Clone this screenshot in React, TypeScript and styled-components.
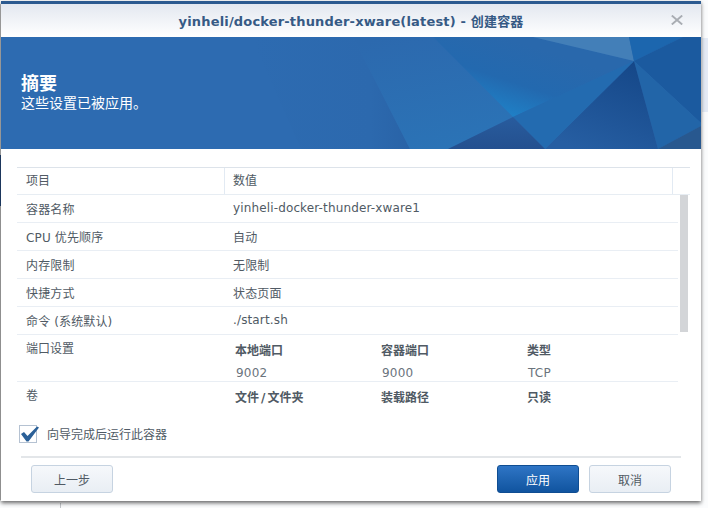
import React from "react";
import styled, { createGlobalStyle } from "styled-components";

const Global = createGlobalStyle`
  html, body { margin: 0; padding: 0; background: #fbfcfd; overflow: hidden; }
  * { box-sizing: border-box; }
`;

const FONT = `"DejaVu Sans", "Noto Sans CJK SC", sans-serif`;

const rows = [
  ["容器名称", "yinheli-docker-thunder-xware1"],
  ["CPU 优先顺序", "自动"],
  ["内存限制", "无限制"],
  ["快捷方式", "状态页面"],
  ["命令 (系统默认)", "./start.sh"],
];

const Banner = () => (
  <BannerArt viewBox="0 0 700 112" preserveAspectRatio="none">
    <defs>
      <linearGradient id="glow" gradientUnits="userSpaceOnUse" x1="535" y1="10" x2="512" y2="80">
        <stop offset="0" stopColor="#2968ac" />
        <stop offset="0.55" stopColor="#2369af" />
        <stop offset="1" stopColor="#1f80c6" />
      </linearGradient>
      <linearGradient id="panel" x1="0.2" y1="0" x2="0.5" y2="1">
        <stop offset="0" stopColor="#2c69ae" />
        <stop offset="1" stopColor="#2b73b6" />
      </linearGradient>
      <linearGradient id="left" x1="0" y1="0" x2="1" y2="0">
        <stop offset="0" stopColor="#2d6bb1" />
        <stop offset="0.75" stopColor="#2c69ae" />
        <stop offset="1" stopColor="#2963a7" />
      </linearGradient>
      <linearGradient id="deep" x1="0.8" y1="0" x2="0.3" y2="1">
        <stop offset="0" stopColor="#154788" />
        <stop offset="1" stopColor="#265ea2" />
      </linearGradient>
      <linearGradient id="low" x1="0.5" y1="0" x2="0.5" y2="1">
        <stop offset="0" stopColor="#285c9e" />
        <stop offset="1" stopColor="#24508f" />
      </linearGradient>
    </defs>
    <rect width="700" height="112" fill="#2d6bb1" />
    <polygon points="250,0 352,0 409,112 300,112" fill="url(#left)" />
    <polygon points="352,0 432,0 512,80 447,112 409,112" fill="url(#panel)" />
    <polygon points="432,0 532,0 633,24 512,80" fill="url(#glow)" />
    <polygon points="532,0 628,0 633,24" fill="#437fb8" />
    <polygon points="628,0 682,0 633,24" fill="#1c66ae" />
    <polygon points="682,0 700,0 700,86 633,24" fill="#1b5a9f" />
    <polygon points="633,24 700,86 700,89 657,112" fill="#2265a8" />
    <polygon points="633,24 657,112 544,112" fill="url(#deep)" />
    <polygon points="633,24 544,112 512,80" fill="#236bb0" />
    <polygon points="512,80 544,112 447,112" fill="url(#low)" />
    <polygon points="700,89 700,112 657,112" fill="#28588f" />
  </BannerArt>
);

export default function App() {
  return (
    <>
      <Global />
      <Page>
        <SideStripe />
        <Dialog>
          <TitleBar>
            <Title>yinheli/docker-thunder-xware(latest) - 创建容器</Title>
            <CloseIcon viewBox="0 0 12 10">
              <path d="M0.8 0.5 L11.2 9.5 M11.2 0.5 L0.8 9.5" stroke="#a9adb3" strokeWidth="1.9" />
            </CloseIcon>
          </TitleBar>
          <Hero>
            <Banner />
            <HeroHeading>摘要</HeroHeading>
            <HeroSub>这些设置已被应用。</HeroSub>
          </Hero>
          <Body>
            <Table>
              <HeaderRow>
                <HeaderCell $width={207}>项目</HeaderCell>
                <HeaderCell $width={448} $divided>数值</HeaderCell>
              </HeaderRow>
              <ScrollArea>
                <Scrollbar />
                {rows.map(([k, v]) => (
                  <Row key={k}>
                    <KeyCell>{k}</KeyCell>
                    <ValueCell>{v}</ValueCell>
                  </Row>
                ))}
                <TallRow $height={47}>
                  <KeyCellTop>端口设置</KeyCellTop>
                  <SubGrid>
                    <b>本地端口</b><b>容器端口</b><b>类型</b>
                    <span>9002</span><span>9000</span><span>TCP</span>
                  </SubGrid>
                </TallRow>
                <TallRow $height={30} $plain>
                  <KeyCellTop>卷</KeyCellTop>
                  <SubGrid>
                    <b>文件<Slash>/</Slash>文件夹</b><b>装载路径</b><b>只读</b>
                  </SubGrid>
                </TallRow>
              </ScrollArea>
            </Table>
            <CheckRow>
              <CheckBox>
                <svg width="20" height="16" viewBox="0 0 20 16">
                  <path d="M1 8 L4 6 L7.5 10 L17 0.5 L19 1.5 L8.5 15.5 L6.5 15.5 Z" fill="#2b6098" />
                </svg>
              </CheckBox>
              <CheckLabel>向导完成后运行此容器</CheckLabel>
            </CheckRow>
          </Body>
          <Footer>
            <Button>上一步</Button>
            <Spacer />
            <Button $primary>应用</Button>
            <Button>取消</Button>
          </Footer>
        </Dialog>
      </Page>
    </>
  );
}

const Page = styled.div`
  position: relative;
  width: 708px;
  height: 508px;
  padding: 1px 0 0 1px;
  background:
    linear-gradient(#e5ebf5, #e5ebf5) right 38px / 6px 74px no-repeat,
    linear-gradient(#c4c7cb, #c4c7cb) 60px 503px / 1px 5px no-repeat,
    #fbfcfd;
  font-family: ${FONT};
  overflow: hidden;
`;
const SideStripe = styled.div`
  position: absolute;
  left: 0;
  top: 4px;
  width: 1px;
  height: 496px;
  background: linear-gradient(
    #c8c8c8 0,
    #c8c8c8 151px,
    #24487a 151px,
    #24487a 202px,
    #bdbdbd 202px
  );
`;
const Dialog = styled.div`
  position: relative;
  width: 700px;
  height: 500px;
  background: #fff;
  border-top: 3px solid #2b5a90;
  box-shadow: 0 2px 4px 0 rgba(0, 0, 0, 0.6);
  display: flex;
  flex-direction: column;
`;
const TitleBar = styled.div`
  position: relative;
  height: 33px;
  flex: none;
  display: flex;
  align-items: center;
  justify-content: center;
  background: linear-gradient(#e3e8f0, #fff);
`;
const Title = styled.div`
  font-size: 13px;
  font-weight: bold;
  letter-spacing: 0.17px;
  color: #365a85;
`;
const CloseIcon = styled.svg`
  position: absolute;
  right: 18px;
  top: 11px;
  width: 12px;
  height: 10px;
`;
const Hero = styled.div`
  position: relative;
  height: 112px;
  flex: none;
  padding: 36px 0 0 20px;
  color: #fff;
  background: #2d6bb1;
  overflow: hidden;
`;
const BannerArt = styled.svg`
  position: absolute;
  left: 0;
  top: 0;
  width: 100%;
  height: 100%;
`;
const HeroHeading = styled.div`
  position: relative;
  font-size: 18px;
  line-height: 21px;
  font-weight: bold;
`;
const HeroSub = styled.div`
  position: relative;
  font-size: 14px;
  line-height: 18px;
`;
const Body = styled.div`
  flex: 1;
  padding: 18px 11px 0 16px;
`;
const Table = styled.div`
  border-top: 1px solid #dde3ea;
`;
const HeaderRow = styled.div`
  display: flex;
  height: 27px;
  border-bottom: 1px solid #e7edf3;
`;
const HeaderCell = styled.div<{ $width: number; $divided?: boolean }>`
  width: ${(p) => p.$width + (p.$divided ? 1 : 0)}px;
  padding-left: ${(p) => (p.$divided ? 8 : 9)}px;
  border-left: ${(p) => (p.$divided ? "1px solid #e2eaf3" : "none")};
  border-right: ${(p) => (p.$divided ? "1px solid #e2eaf3" : "none")};
  font-size: 12px;
  line-height: 26px;
  color: #505a64;
`;
const ScrollArea = styled.div`
  position: relative;
  width: 661px;
`;
const Scrollbar = styled.div`
  position: absolute;
  left: 663px;
  top: 0;
  width: 8px;
  height: 137px;
  background: #d3d5d8;
`;
const Row = styled.div`
  display: flex;
  height: 28px;
  padding-bottom: 1px;
  align-items: center;
  border-bottom: 1px solid #e9eef4;
  font-size: 12px;
  letter-spacing: 0.14px;
  color: #505a64;
`;
const TallRow = styled.div<{ $height: number; $plain?: boolean }>`
  display: flex;
  height: ${(p) => p.$height}px;
  border-bottom: ${(p) => (p.$plain ? "none" : "1px solid #e9eef4")};
  font-size: 12px;
  color: #505a64;
`;
const KeyCell = styled.div`
  width: 216px;
  padding-left: 9px;
`;
const ValueCell = styled.div`
  flex: 1;
`;
const KeyCellTop = styled(KeyCell)`
  padding-top: 6px;
  line-height: 16px;
`;
const SubGrid = styled.div`
  display: grid;
  grid-template-columns: 146px 146px 100px;
  grid-auto-rows: 22px;
  padding: 5px 0 0 2px;
  line-height: 23px;
  b { font-weight: bold; }
  span { color: #6b747d; letter-spacing: 0.2px; padding-left: 1px; }
`;
const Slash = styled.em`
  font-style: normal;
  margin: 0 2px;
`;
const CheckRow = styled.div`
  display: flex;
  align-items: center;
  margin: 9px 0 0 2px;
  height: 24px;
`;
const CheckBox = styled.div`
  position: relative;
  width: 18px;
  height: 18px;
  margin-top: 1px;
  border: 1px solid #b5c2d2;
  background: #fff;
  svg { position: absolute; left: 0; top: 0; }
`;
const CheckLabel = styled.div`
  margin-left: 10px;
  font-size: 12px;
  color: #505a64;
`;
const Footer = styled.div`
  flex: none;
  height: 45px;
  margin: 0 20px;
  padding: 7px 10px 0;
  border-top: 2px solid #e3e6e9;
  display: flex;
  gap: 10px;
`;
const Spacer = styled.div`
  flex: 1;
`;
const Button = styled.button<{ $primary?: boolean }>`
  width: 82px;
  height: 28px;
  padding: 0;
  border-radius: 3px;
  font-family: ${FONT};
  font-size: 12px;
  border: 1px solid ${(p) => (p.$primary ? "#0f4d92" : "#c6d3e1")};
  color: ${(p) => (p.$primary ? "#fff" : "#505a64")};
  background: ${(p) =>
    p.$primary
      ? "linear-gradient(#2f75c5, #10549f)"
      : "linear-gradient(#f6f8fb, #e9eef4)"};
`;
